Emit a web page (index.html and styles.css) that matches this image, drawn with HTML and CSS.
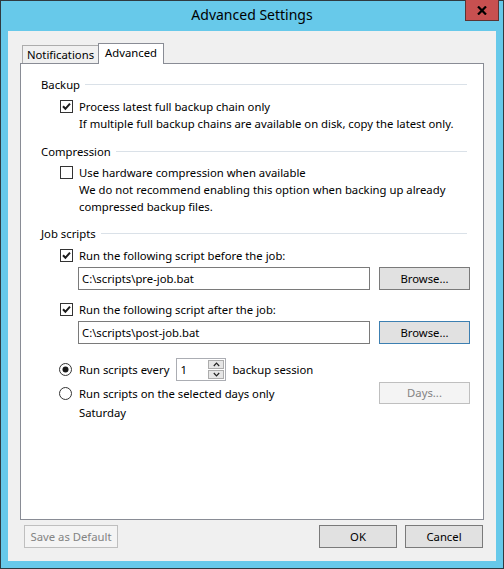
FILE: index.html
```html
<!DOCTYPE html>
<html>
<head>
<meta charset="utf-8">
<link rel="stylesheet" href="styles.css">
</head>
<body>
<div class="window">
  <div class="titlebar">
    <span class="title">Advanced Settings</span>
    <div class="close">
      <svg width="10" height="9" viewBox="0 0 10 9"><path d="M1 0.5 L9 8.5 M9 0.5 L1 8.5" stroke="#000" stroke-width="2.2"/></svg>
    </div>
  </div>
  <div class="client">
    <div class="tabs">
      <div class="tab">Notifications</div>
      <div class="tab active">Advanced</div>
    </div>
    <div class="panel">
      <div class="hdr hdr-first"><span>Backup</span><i class="rule"></i></div>
      <div class="crow c1">
        <svg class="cb" width="13" height="13" viewBox="0 0 13 13"><rect x="0.5" y="0.5" width="12" height="12" fill="#fff" stroke="#333"/><path d="M3 6.3 L5.4 8.8 L10 3.6" fill="none" stroke="#1a1a1a" stroke-width="2"/></svg>
        <span>Process latest full backup chain only</span>
      </div>
      <div class="desc">If multiple full backup chains are available on disk, copy the latest only.</div>

      <div class="hdr hdr-next"><span>Compression</span><i class="rule"></i></div>
      <div class="crow c2">
        <svg class="cb" width="13" height="13" viewBox="0 0 13 13"><rect x="0.5" y="0.5" width="12" height="12" fill="#fff" stroke="#333"/></svg>
        <span>Use hardware compression when available</span>
      </div>
      <div class="desc">We do not recommend enabling this option when backing up already<br>compressed backup files.</div>

      <div class="hdr hdr-last"><span>Job scripts</span><i class="rule"></i></div>
      <div class="crow c3">
        <svg class="cb" width="13" height="13" viewBox="0 0 13 13"><rect x="0.5" y="0.5" width="12" height="12" fill="#fff" stroke="#333"/><path d="M3 6.3 L5.4 8.8 L10 3.6" fill="none" stroke="#1a1a1a" stroke-width="2"/></svg>
        <span>Run the following script before the job:</span>
      </div>
      <div class="frow">
        <div class="input">C:\scripts\pre-job.bat</div>
        <div class="btn browse">Browse...</div>
      </div>
      <div class="crow c4">
        <svg class="cb" width="13" height="13" viewBox="0 0 13 13"><rect x="0.5" y="0.5" width="12" height="12" fill="#fff" stroke="#333"/><path d="M3 6.3 L5.4 8.8 L10 3.6" fill="none" stroke="#1a1a1a" stroke-width="2"/></svg>
        <span>Run the following script after the job:</span>
      </div>
      <div class="frow">
        <div class="input">C:\scripts\post-job.bat</div>
        <div class="btn browse focus">Browse...</div>
      </div>

      <div class="rrow r1">
        <svg class="rb" width="13" height="13" viewBox="0 0 13 13"><circle cx="6.5" cy="6.5" r="6" fill="#fff" stroke="#333"/><circle cx="6.5" cy="6.5" r="3" fill="#1a1a1a"/></svg>
        <span>Run scripts every</span>
        <div class="spin">
          <span class="spinval">1</span>
          <div class="spinbtns">
            <div class="sb"><svg width="7" height="5" viewBox="0 0 7 5"><path d="M0.8 4 L3.5 1.2 L6.2 4" fill="none" stroke="#222" stroke-width="1.2"/></svg></div>
            <div class="sb"><svg width="7" height="5" viewBox="0 0 7 5"><path d="M0.8 1 L3.5 3.8 L6.2 1" fill="none" stroke="#222" stroke-width="1.2"/></svg></div>
          </div>
        </div>
        <span>backup session</span>
      </div>
      <div class="rrow r2">
        <svg class="rb" width="13" height="13" viewBox="0 0 13 13"><circle cx="6.5" cy="6.5" r="6" fill="#fff" stroke="#333"/></svg>
        <span class="grow">Run scripts on the selected days only</span>
        <div class="btn disabled days">Days...</div>
      </div>
      <div class="desc sat">Saturday</div>
    </div>
    <div class="footer">
      <div class="btn disabled save">Save as Default</div>
      <div class="spacer"></div>
      <div class="btn ok">OK</div>
      <div class="btn cancel">Cancel</div>
    </div>
  </div>
</div>
</body>
</html>
```

FILE: styles.css
```css
html, body {
  margin: 0;
  padding: 0;
  background: #ffffff;
}
body {
  font-family: "Noto Sans", "Open Sans", sans-serif;
  font-size: 11.3px;
  color: #000;
}
.window {
  position: relative;
  width: 502px;
  height: 567px;
  border: 1px solid #2f3a40;
  background: #67c9ea;
  display: flex;
  flex-direction: column;
}
.titlebar {
  height: 30px;
  display: flex;
  align-items: center;
  justify-content: center;
}
.title {
  font-size: 14px;
  padding-bottom: 3px;
}
.close {
  position: absolute;
  top: -1px;
  right: 4px;
  width: 32px;
  height: 20px;
  background: #c75050;
  border: 1px solid #5a3434;
  border-top: none;
  display: flex;
  align-items: center;
  justify-content: center;
}
.client {
  margin: 0 7px 7px 7px;
  flex: 1;
  background: #f0f0f0;
  padding: 12px 12px 13px 12px;
  display: flex;
  flex-direction: column;
}
.tabs {
  display: flex;
  align-items: flex-end;
  padding-left: 2px;
  height: 21px;
  margin-bottom: -1px;
}
.tab {
  height: 19px;
  box-sizing: border-box;
  border: 1px solid #acacac;
  border-bottom: none;
  background: #f0f0f0;
  line-height: 18px;
  width: 77px;
  text-align: center;
}
.tab.active {
  position: relative;
  z-index: 1;
  height: 21px;
  width: 66px;
  margin-left: -1px;
  background: #fff;
  border-color: #898c95;
  line-height: 17px;
}
.panel {
  flex: 1;
  background: #fff;
  border: 1px solid #898c95;
  padding: 12px 13px 0 20px;
}
.hdr {
  display: flex;
  align-items: center;
  height: 17px;
  line-height: 17px;
  margin-right: 3px;
}
.hdr-next {
  margin-top: 11px;
}
.hdr-last {
  margin-top: 10px;
}
.rule {
  flex: 1;
  height: 1px;
  background: #dae1e8;
  margin-left: 5px;
}
.crow, .rrow {
  display: flex;
  align-items: center;
  height: 17px;
  line-height: 17px;
  margin-left: 19px;
}
.c1 { margin-top: 5px; }
.c2 { margin-top: 4px; }
.c3 { margin-top: 5px; }
.c4 { margin-top: 11px; }
.cb {
  margin-right: 6px;
  flex: none;
}
.rb {
  margin-left: -1px;
  margin-right: 7px;
  flex: none;
}
.desc {
  margin-left: 38px;
  line-height: 17px;
}
.frow {
  display: flex;
  margin-top: 3px;
  margin-left: 37px;
  gap: 9px;
}
.input {
  width: 292px;
  height: 23px;
  box-sizing: border-box;
  border: 1px solid #7a7a7a;
  padding-left: 3px;
  line-height: 21px;
  background: #fff;
}
.btn {
  height: 23px;
  box-sizing: border-box;
  border: 1px solid #7a7a7a;
  background: #e1e1e1;
  text-align: center;
  line-height: 21px;
}
.browse {
  width: 91px;
}
.btn.focus {
  border-color: #3c7fb1;
}
.btn.disabled {
  background: #f4f4f4;
  border-color: #bfbfbf;
  color: #838383;
}
.r1 {
  margin-top: 14px;
  height: 23px;
}
.r2 {
  margin-top: 1px;
  height: 22px;
}
.grow {
  flex: 1;
}
.days {
  width: 91px;
  height: 22px;
  line-height: 20px;
}
.spin {
  display: flex;
  width: 50px;
  height: 23px;
  box-sizing: border-box;
  border: 1px solid #abadb3;
  margin: 0 6px 0 7px;
  background: #fff;
}
.spinval {
  flex: 1;
  padding-left: 3px;
  line-height: 21px;
}
.spinbtns {
  display: flex;
  flex-direction: column;
  padding: 1px 0 1px 0;
  gap: 1px;
  width: 16px;
  margin-right: 1px;
}
.sb {
  flex: 1;
  background: #e6e6e6;
  border: 1px solid #acacac;
  display: flex;
  align-items: center;
  justify-content: center;
}
.sat {
  line-height: 17px;
}
.footer {
  display: flex;
  margin-top: 5px;
  padding: 0 1px 0 4px;
  gap: 8px;
}
.save {
  width: 94px;
}
.spacer {
  flex: 1;
}
.ok, .cancel {
  width: 78px;
}
```
